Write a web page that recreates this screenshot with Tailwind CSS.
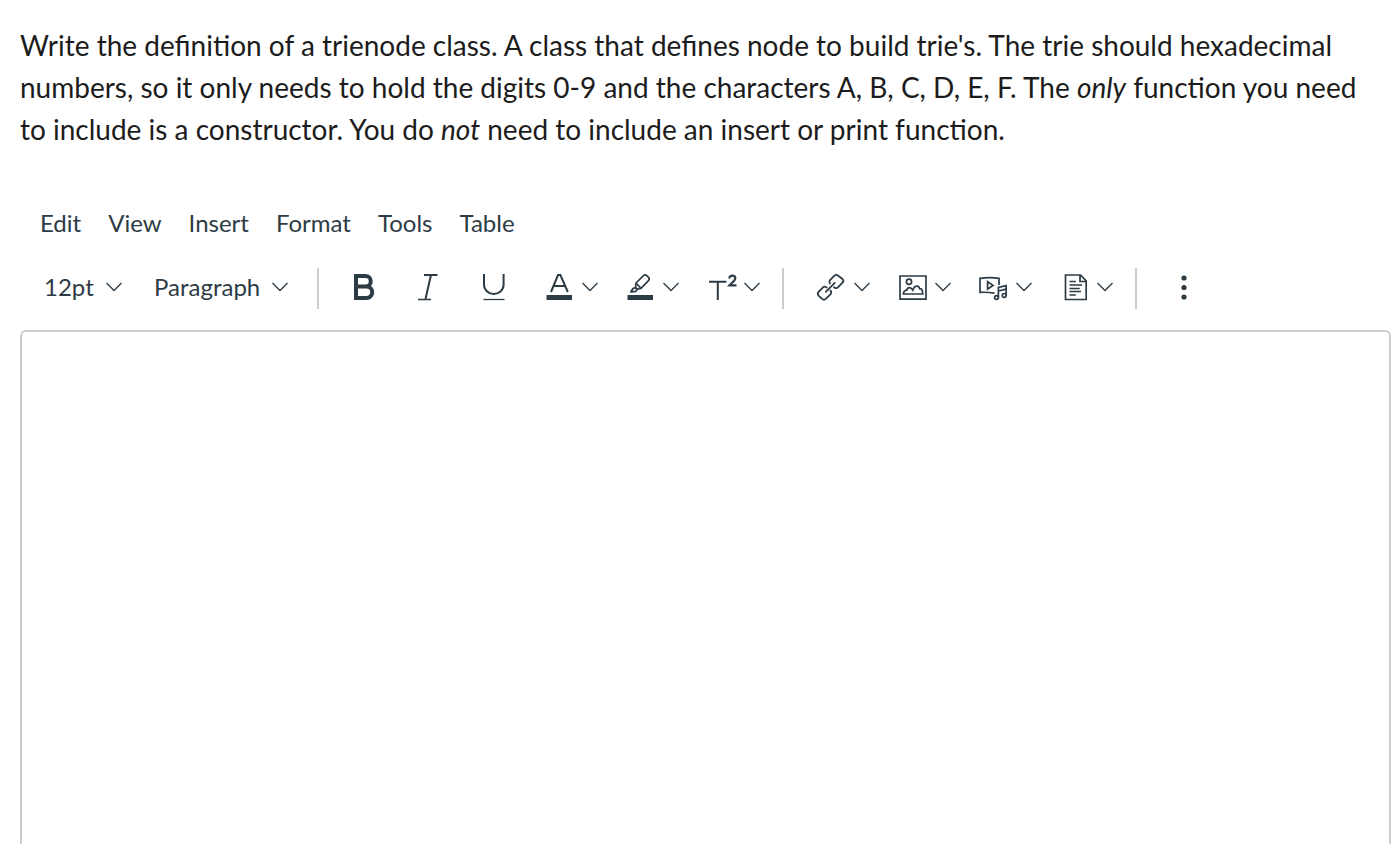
<!DOCTYPE html>
<html lang="en">
<head>
  <meta charset="UTF-8">
  <meta name="viewport" content="width=device-width, initial-scale=1">
  <title>Quiz question</title>
  <script src="https://cdn.jsdelivr.net/npm/@tailwindcss/browser@4"></script>
</head>
<body class="bg-white font-['Lato',sans-serif] text-[#2d3b45]">

  <!-- chevron shared by all the drop-downs -->
  <svg class="hidden">
    <symbol id="chevron" viewBox="0 0 16 10">
      <path d="M.5 1 8 8.500 15.500 1" fill="none" stroke="currentColor" stroke-width="1.300"/>
    </symbol>
  </svg>

  <main class="flex min-h-screen flex-col pl-5 pr-[3px] pt-6">

    <p class="pr-5 text-[28px] leading-[42px] text-[#1c1c1c]">
      Write the definition of a trienode class. A class that defines node to build trie's. The trie should hexadecimal numbers, so it only needs to hold the digits 0-9 and the characters A, B, C, D, E, F. The <em>only</em> function you need to include is a constructor. You do <em>not</em> need to include an insert or print function.
    </p>

    <!-- menu bar -->
    <nav class="mt-[57px] flex gap-[27px] pl-5 text-2xl">
      <button type="button">Edit</button>
      <button type="button">View</button>
      <button type="button">Insert</button>
      <button type="button">Format</button>
      <button type="button">Tools</button>
      <button type="button">Table</button>
    </nav>

    <!-- toolbar -->
    <div role="toolbar" aria-label="Formatting" class="mt-[29px] flex h-[41px] items-center pb-[3px] pl-6">
      <div class="grid w-[78px] items-center">
        <select aria-label="Font size" class="col-start-1 row-start-1 w-full appearance-none bg-transparent text-2xl">
          <option>12pt</option>
        </select>
        <svg class="pointer-events-none col-start-1 row-start-1 h-[10px] w-4 justify-self-end"><use href="#chevron"/></svg>
      </div>
      <div class="ml-8 grid w-[134px] items-center">
        <select aria-label="Block format" class="col-start-1 row-start-1 w-full appearance-none bg-transparent text-2xl">
          <option>Paragraph</option>
        </select>
        <svg class="pointer-events-none col-start-1 row-start-1 h-[10px] w-4 justify-self-end"><use href="#chevron"/></svg>
      </div>

      <div class="ml-[29px] h-[41px] w-[2px] self-start bg-[#c7cdd1]"></div>

      <div class="ml-[31px] flex gap-[37px]">
        <button type="button" aria-label="Bold">
          <svg class="size-7" viewBox="0 0 28 28" fill="none" stroke="currentColor" stroke-width="4">
            <path d="M5 3h10.500a5.200 5.200 0 0 1 0 10.500H5M15.500 13.500h1a5.700 5.700 0 0 1 0 11.500H5M6 1v26"/>
          </svg>
        </button>
        <button type="button" aria-label="Italic">
          <svg class="size-7" viewBox="0 0 28 28" fill="none" stroke="currentColor">
            <path d="M9 2h13.500" stroke-width="2"/>
            <path d="M16 2 10.500 26" stroke-width="2"/>
            <path d="M3 26.500h13" stroke-width="1.500"/>
          </svg>
        </button>
        <button type="button" aria-label="Underline">
          <svg class="size-7" viewBox="0 0 28 28" fill="none" stroke="currentColor">
            <path d="M4 1v10.500a9.800 9.500 0 0 0 19.600 0V1" stroke-width="2"/>
            <path d="M3.500 26.500h21" stroke-width="1.300"/>
          </svg>
        </button>
      </div>

      <div class="ml-9 flex gap-[27px]">
        <button type="button" aria-label="Text color" class="flex items-center gap-[10px]">
          <svg class="size-7" viewBox="0 0 28 28" fill="none" stroke="currentColor" stroke-width="2">
            <path d="M7 19 14 2h2.400l7.400 17M9.300 13h12"/>
            <path d="M2.500 24.500H28" stroke-width="5"/>
          </svg>
          <svg class="h-[10px] w-4"><use href="#chevron"/></svg>
        </button>
        <button type="button" aria-label="Highlight color" class="flex items-center gap-[10px]">
          <svg class="size-7" viewBox="0 0 28 28" fill="none" stroke="currentColor" stroke-width="1.700" stroke-linejoin="round">
            <path d="m11 10 7.500-7.300a2.400 2.400 0 0 1 3.200 0l1.800 1.600a2.400 2.400 0 0 1 0 3.300L16 15.300Z"/>
            <path d="m11 10-.5 4.500 1.700 1.800 3.800-1"/>
            <path d="M10.500 14.500 8 15.600 5.800 18.800l5-.4 1.400-2.100Z"/>
            <path d="M2.500 24.500H28" stroke-width="5"/>
          </svg>
          <svg class="h-[10px] w-4"><use href="#chevron"/></svg>
        </button>
        <button type="button" aria-label="Superscript" class="flex items-center gap-[10px]">
          <svg class="size-7 overflow-visible" viewBox="0 0 28 28" fill="none" stroke="currentColor">
            <path d="M3 8.800h17.500M11.800 8.800V27" stroke-width="2"/>
            <path d="M23.300 5.500c0-4 6-3.500 6-.3 0 2.300-3.500 4.500-5.800 7.100h7" stroke-width="2.200"/>
          </svg>
          <svg class="h-[10px] w-4"><use href="#chevron"/></svg>
        </button>
      </div>

      <div class="ml-[22px] h-[41px] w-[2px] self-start bg-[#c7cdd1]"></div>

      <div class="ml-8 flex gap-[27px]">
        <button type="button" aria-label="Links" class="flex items-center gap-[10px]">
          <svg class="size-7 overflow-visible" viewBox="0 0 28 28" fill="none" stroke="currentColor" stroke-width="1.800" stroke-linejoin="round" stroke-linecap="round">
            <path d="m14 10.500-.5-1.500a2 2 0 0 1 .5-1.800l4.400-4.500c1.300-1.100 2.600-1.100 3.800 0L26.500 6c1.100 1.200 1.100 2.500 0 3.700l-4.800 4.900a2.500 2.500 0 0 1-2.200.5l-1.500-.8"/>
            <path d="m14.500 17.500.7 1.500a2.300 2.300 0 0 1-.6 2.100l-4.800 4.800c-1.200 1.100-2.500 1.100-3.700 0l-3.500-3.300c-1.100-1.200-1.100-2.500 0-3.700L7 14.300a2.400 2.400 0 0 1 2.100-.6l1.600.8"/>
            <path d="m9.800 18.900 9-9"/>
          </svg>
          <svg class="h-[10px] w-4"><use href="#chevron"/></svg>
        </button>
        <button type="button" aria-label="Images" class="flex items-center gap-[10px]">
          <svg class="size-7 overflow-visible" viewBox="0 0 28 28" fill="none" stroke="currentColor" stroke-width="1.700">
            <path d="M3 3h26v23.200H3Z"/>
            <circle cx="12" cy="8.700" r="2.600"/>
            <path d="M6.300 21h19.500c-.3-4.500-1.400-5.600-3.100-5.300-.5-1.700-1.400-2.500-2.700-2.500-2 0-3.300 1.600-4.200 3.900-1-1.600-2-2.500-3.300-2.500-1.600 0-2.400 1-2.700 2.600-1.700 0-3 1-3.500 3.800Z"/>
          </svg>
          <svg class="h-[10px] w-4"><use href="#chevron"/></svg>
        </button>
        <button type="button" aria-label="Record/Upload Media" class="flex items-center gap-[10px]">
          <svg class="size-7 overflow-visible" viewBox="0 0 28 28" fill="none" stroke="currentColor" stroke-width="1.700">
            <path d="M16.500 20.200a60 60 0 0 0-14.500-.8V5.300a60 60 0 0 1 19 0V12"/>
            <path d="m9.600 8.700 5.400 3.700-5.400 3.700Z"/>
            <path d="M20.400 24.300V14.500l7.700-1.900v9.700M20.400 18l7.700-1.900"/>
            <circle cx="18.500" cy="24.500" r="1.900"/>
            <circle cx="26.200" cy="22.400" r="1.900"/>
          </svg>
          <svg class="h-[10px] w-4"><use href="#chevron"/></svg>
        </button>
        <button type="button" aria-label="Documents" class="flex items-center gap-[10px]">
          <svg class="size-7" viewBox="0 0 28 28" fill="none" stroke="currentColor" stroke-width="1.700">
            <path d="M6.500 2h15l5.700 6v18.500H6.500ZM21 2v6.500h6"/>
            <path d="M10.500 8.500h6.200M10.500 12h12.500M10.500 15.500h10.300M10.500 18.500h11.500M10.500 22h6.300"/>
          </svg>
          <svg class="h-[10px] w-4"><use href="#chevron"/></svg>
        </button>
      </div>

      <div class="ml-[22px] h-[41px] w-[2px] self-start bg-[#c7cdd1]"></div>

      <button type="button" aria-label="More" class="ml-8">
        <svg class="size-7" viewBox="0 0 28 28" fill="currentColor">
          <circle cx="15" cy="5" r="2.600"/>
          <circle cx="15" cy="14.500" r="2.600"/>
          <circle cx="15" cy="24" r="2.600"/>
        </svg>
      </button>
    </div>

    <!-- answer area, runs on past the fold -->
    <textarea aria-label="Answer" class="mt-[21px] flex-1 resize-none rounded-t-md border-2 border-b-0 border-[#c7cdd1] p-4 text-2xl outline-none"></textarea>
  </main>

</body>
</html>
